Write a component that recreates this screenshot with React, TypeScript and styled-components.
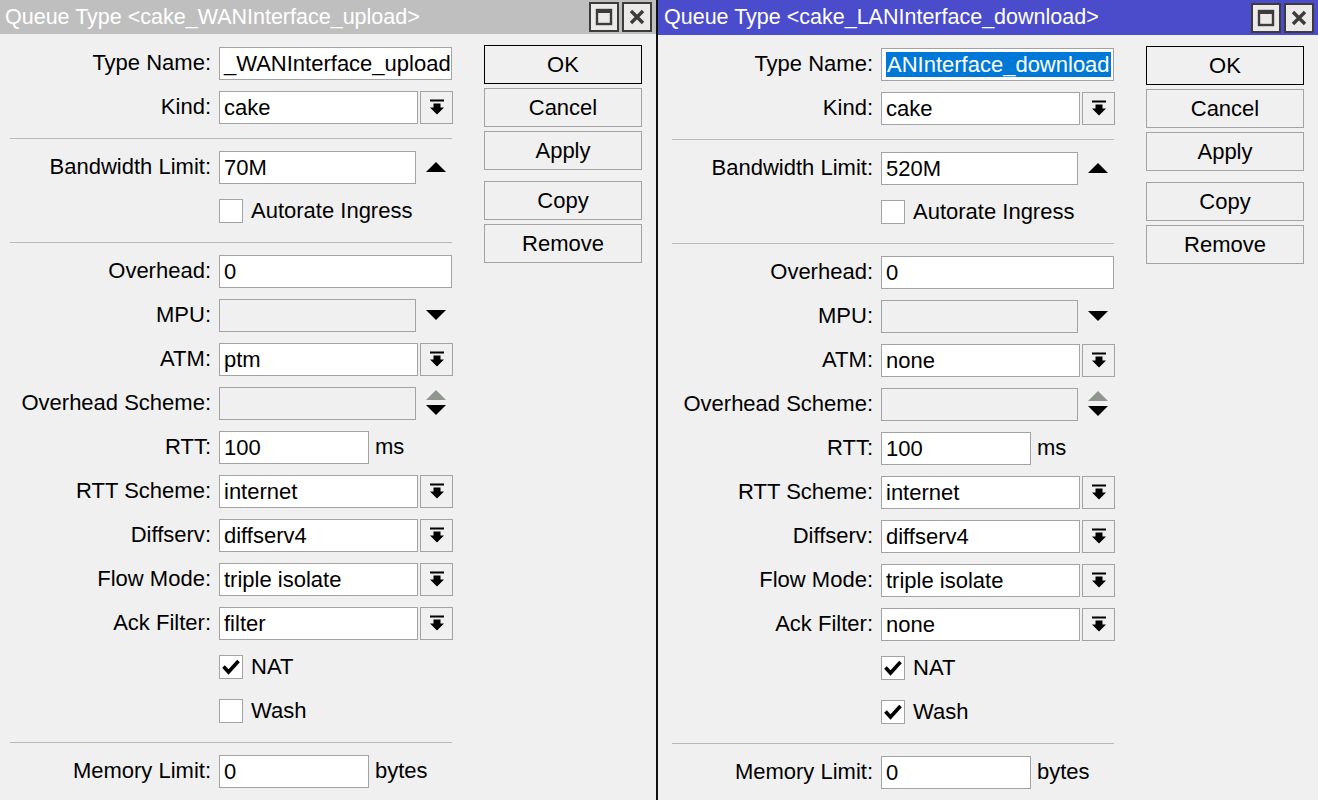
import React from "react";
import styled, { createGlobalStyle } from "styled-components";

const GlobalStyle = createGlobalStyle`
  body {
    margin: 0;
    background: #f0f0f0;
    font-family: "Liberation Sans", Arial, sans-serif;
    font-size: 22px;
    color: #000;
  }
`;

const Desktop = styled.div`
  display: flex;
  width: 1318px;
  height: 800px;
  overflow: hidden;
  background: #f0f0f0;
`;

const Window = styled.section<{ $active?: boolean }>`
  display: flex;
  flex-direction: column;
  flex: none;
  width: ${({ $active }) => ($active ? "660px" : "656px")};
  border-right: ${({ $active }) => ($active ? "none" : "2px solid #111")};
  background: #f0f0f0;
`;

const TitleBar = styled.div<{ $active?: boolean }>`
  display: flex;
  align-items: center;
  justify-content: space-between;
  height: ${({ $active }) => ($active ? "35px" : "34px")};
  padding: 0 4px 0 ${({ $active }) => ($active ? "6px" : "5px")};
  background: ${({ $active }) => ($active ? "#4a4ccb" : "#bfbfbf")};
  color: #fff;
  font-size: 21.5px;
  white-space: nowrap;
`;

const TitleButtons = styled.div`
  display: flex;
  gap: 3px;
`;

const TitleButton = styled.div`
  display: flex;
  align-items: center;
  justify-content: center;
  width: 30px;
  height: 30px;
  box-sizing: border-box;
  border: 2px solid #3c3c3c;
  background: #ece9e9;
`;

const Body = styled.div<{ $inset: number }>`
  display: flex;
  padding: 7px 0 0 ${({ $inset }) => $inset}px;
`;

const Form = styled.div`
  display: flex;
  flex-direction: column;
  width: 442px;
`;

const Row = styled.div`
  display: grid;
  grid-template-columns: 201px 1fr;
  column-gap: 8px;
  align-items: center;
  height: 44px;
`;

const Label = styled.div`
  text-align: right;
  white-space: nowrap;
`;

const FieldLine = styled.div`
  display: flex;
  align-items: center;
  gap: 2px;
`;

const TextBox = styled.div<{ $width: number; $disabled?: boolean }>`
  width: ${({ $width }) => $width}px;
  height: 33px;
  box-sizing: border-box;
  border: 1px solid #a3a3a3;
  background: ${({ $disabled }) => ($disabled ? "#f0f0f0" : "#fff")};
  padding: 0 4px;
  line-height: 31px;
  white-space: nowrap;
  overflow: hidden;
`;

const Selected = styled.span`
  background: #0078d7;
  color: #fff;
  padding: 0 1px;
`;

const DropButton = styled.div`
  display: flex;
  align-items: center;
  justify-content: center;
  width: 33px;
  height: 33px;
  box-sizing: border-box;
  border: 1px solid #a3a3a3;
  background: #f0f0f0;
`;

const Indicator = styled.div`
  display: flex;
  justify-content: center;
  width: 36px;
`;

const Unit = styled.span`
  margin-left: 4px;
`;

const CheckLine = styled.div`
  display: flex;
  align-items: center;
  gap: 8px;
`;

const CheckBox = styled.div`
  display: flex;
  align-items: center;
  justify-content: center;
  width: 24px;
  height: 24px;
  box-sizing: border-box;
  border: 1px solid #a3a3a3;
  background: #fff;
`;

const Separator = styled.div`
  height: 16px;
  display: flex;
  align-items: center;
  &::after {
    content: "";
    flex: 1;
    height: 1px;
    margin-top: 2px;
    background: #b9b9b9;
  }
`;

const ButtonColumn = styled.div`
  display: flex;
  flex-direction: column;
  gap: 4px;
  margin-left: 32px;
  padding-top: 4px;
`;

const ActionButton = styled.button<{ $primary?: boolean }>`
  width: 158px;
  height: 39px;
  box-sizing: border-box;
  border: 1px solid ${({ $primary }) => ($primary ? "#000" : "#a3a3a3")};
  background: #f0f0f0;
  font: inherit;
  color: #000;
  padding: 0;
`;

const ButtonGap = styled.div`
  height: 3px;
`;

const DropIcon = () => (
  <svg width="16" height="16" viewBox="0 0 16 16">
    <rect x="1" y="0.5" width="14" height="2" fill="#000" />
    <path d="M4.5 4.5h7v4h3.5L8 15.5 1 8.5h3.5z" fill="#000" />
  </svg>
);

const UpTriangle = () => (
  <svg width="20" height="10" viewBox="0 0 20 10">
    <path d="M0 10L10 0l10 10z" fill="#000" />
  </svg>
);

const DownTriangle = () => (
  <svg width="20" height="10" viewBox="0 0 20 10">
    <path d="M0 0h20L10 10z" fill="#000" />
  </svg>
);

const UpDown = () => (
  <svg width="20" height="26" viewBox="0 0 20 26">
    <path d="M0 10L10 0l10 10z" fill="#8f968f" />
    <path d="M0 15h20L10 25z" fill="#000" />
  </svg>
);

const CheckMark = () => (
  <svg width="18" height="16" viewBox="0 0 18 16">
    <path d="M1.5 7.5l5 5.5L16.5 2" stroke="#000" strokeWidth="3.6" fill="none" />
  </svg>
);

const MaxIcon = () => (
  <svg width="18" height="18" viewBox="0 0 18 18">
    <rect x="2" y="2" width="14" height="14" fill="none" stroke="#3c3c3c" strokeWidth="2.4" />
    <rect x="2" y="2" width="14" height="3" fill="#3c3c3c" />
  </svg>
);

const CloseIcon = () => (
  <svg width="18" height="18" viewBox="0 0 18 18">
    <path d="M3 3l12 12M15 3L3 15" stroke="#3c3c3c" strokeWidth="3.4" />
  </svg>
);

type Settings = {
  title: string;
  active?: boolean;
  inset: number;
  typeName: React.ReactNode;
  bandwidth: string;
  atm: string;
  ackFilter: string;
  wash: boolean;
};

const SelectRow = ({ label, value }: { label: string; value: string }) => (
  <Row>
    <Label>{label}:</Label>
    <FieldLine>
      <TextBox $width={199}>{value}</TextBox>
      <DropButton>
        <DropIcon />
      </DropButton>
    </FieldLine>
  </Row>
);

const CheckRow = ({ label, checked }: { label: string; checked: boolean }) => (
  <Row>
    <span />
    <CheckLine>
      <CheckBox>{checked && <CheckMark />}</CheckBox>
      <span>{label}</span>
    </CheckLine>
  </Row>
);

const QueueWindow = ({ s }: { s: Settings }) => (
  <Window $active={s.active}>
    <TitleBar $active={s.active}>
      <span>{s.title}</span>
      <TitleButtons>
        <TitleButton>
          <MaxIcon />
        </TitleButton>
        <TitleButton>
          <CloseIcon />
        </TitleButton>
      </TitleButtons>
    </TitleBar>
    <Body $inset={s.inset}>
      <Form>
        <Row>
          <Label>Type Name:</Label>
          <TextBox $width={233}>{s.typeName}</TextBox>
        </Row>
        <SelectRow label="Kind" value="cake" />
        <Separator />
        <Row>
          <Label>Bandwidth Limit:</Label>
          <FieldLine>
            <TextBox $width={197}>{s.bandwidth}</TextBox>
            <Indicator>
              <UpTriangle />
            </Indicator>
          </FieldLine>
        </Row>
        <CheckRow label="Autorate Ingress" checked={false} />
        <Separator />
        <Row>
          <Label>Overhead:</Label>
          <TextBox $width={233}>0</TextBox>
        </Row>
        <Row>
          <Label>MPU:</Label>
          <FieldLine>
            <TextBox $width={197} $disabled />
            <Indicator>
              <DownTriangle />
            </Indicator>
          </FieldLine>
        </Row>
        <SelectRow label="ATM" value={s.atm} />
        <Row>
          <Label>Overhead Scheme:</Label>
          <FieldLine>
            <TextBox $width={197} $disabled />
            <Indicator>
              <UpDown />
            </Indicator>
          </FieldLine>
        </Row>
        <Row>
          <Label>RTT:</Label>
          <FieldLine>
            <TextBox $width={150}>100</TextBox>
            <Unit>ms</Unit>
          </FieldLine>
        </Row>
        <SelectRow label="RTT Scheme" value="internet" />
        <SelectRow label="Diffserv" value="diffserv4" />
        <SelectRow label="Flow Mode" value="triple isolate" />
        <SelectRow label="Ack Filter" value={s.ackFilter} />
        <CheckRow label="NAT" checked />
        <CheckRow label="Wash" checked={s.wash} />
        <Separator />
        <Row>
          <Label>Memory Limit:</Label>
          <FieldLine>
            <TextBox $width={150}>0</TextBox>
            <Unit>bytes</Unit>
          </FieldLine>
        </Row>
      </Form>
      <ButtonColumn>
        <ActionButton $primary>OK</ActionButton>
        <ActionButton>Cancel</ActionButton>
        <ActionButton>Apply</ActionButton>
        <ButtonGap />
        <ActionButton>Copy</ActionButton>
        <ActionButton>Remove</ActionButton>
      </ButtonColumn>
    </Body>
  </Window>
);

const windows: Settings[] = [
  {
    title: "Queue Type <cake_WANInterface_upload>",
    inset: 10,
    typeName: "_WANInterface_upload",
    bandwidth: "70M",
    atm: "ptm",
    ackFilter: "filter",
    wash: false,
  },
  {
    title: "Queue Type <cake_LANInterface_download>",
    active: true,
    inset: 14,
    typeName: <Selected>ANInterface_download</Selected>,
    bandwidth: "520M",
    atm: "none",
    ackFilter: "none",
    wash: true,
  },
];

export default function App() {
  return (
    <>
      <GlobalStyle />
      <Desktop>
        {windows.map((w) => (
          <QueueWindow key={w.title} s={w} />
        ))}
      </Desktop>
    </>
  );
}
